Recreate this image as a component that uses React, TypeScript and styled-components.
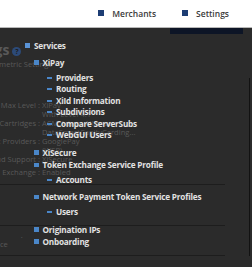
import React from "react";
import styled, { createGlobalStyle } from "styled-components";

const GlobalStyle = createGlobalStyle`
  html, body {
    margin: 0;
    padding: 0;
    width: 252px;
    height: 267px;
    overflow: hidden;
    background: #2b2b2b;
  }
  * { box-sizing: border-box; }
`;

type MenuNode = { title: string; children?: string[] };

const services: MenuNode[] = [
  {
    title: "XiPay",
    children: [
      "Providers",
      "Routing",
      "XiId Information",
      "Subdivisions",
      "Compare ServerSubs",
      "WebGUI Users",
    ],
  },
  { title: "XiSecure" },
  { title: "Token Exchange Service Profile", children: ["Accounts"] },
  { title: "Network Payment Token Service Profiles", children: ["Users"] },
  { title: "Origination IPs" },
  { title: "Onboarding" },
];

const details = [
  { label: "Max Level :", lines: ["XiPay", "With Level 4.1"] },
  { label: "Cartridges :", lines: ["ACM Adwm Alliance", "DataSmartCapityCarding..."] },
  { label: "Payment Providers :", lines: ["GooglePay", "(WSP)"] },
  { label: "Cloud Support :", lines: ["XiSecure"] },
  { label: "Exchange :", lines: ["Enabled"] },
];

export default function App() {
  return (
    <>
      <GlobalStyle />
      <Header>
        <NavItem>
          <NavSquare />
          Merchants
        </NavItem>
        <NavItem>
          <NavSquare />
          Settings
        </NavItem>
      </Header>
      <Body>
        <ActiveBarRow>
          <ActiveBar />
        </ActiveBarRow>
        <PageRow>
          <Page>
            <PageTitle>
              Settings <HelpIcon>?</HelpIcon>
            </PageTitle>
            <Subtitle>Parametric Settings</Subtitle>
            <DetailTable>
              {details.map((d) => (
                <DetailRow key={d.label}>
                  <DetailLabel>{d.label}</DetailLabel>
                  <DetailValue>
                    {d.lines.map((l) => (
                      <div key={l}>{l}</div>
                    ))}
                  </DetailValue>
                </DetailRow>
              ))}
            </DetailTable>
            <Rule />
            <EmptyRow />
            <Rule />
            <BalanceRow>
              <span>Balance</span>
              <Dot>.</Dot>
            </BalanceRow>
            <Rule />
          </Page>
          <EdgeLine />
        </PageRow>

        <Menu>
          <MenuHeading>
            <HeadSquare />
            Services
          </MenuHeading>
          <TopList>
            {services.map((s) => (
              <li key={s.title}>
                <TopItem>
                  <Square />
                  {s.title}
                </TopItem>
                {s.children && (
                  <SubList>
                    {s.children.map((c) => (
                      <SubItem key={c}>
                        <Dash />
                        {c}
                      </SubItem>
                    ))}
                  </SubList>
                )}
              </li>
            ))}
          </TopList>
        </Menu>
      </Body>
    </>
  );
}

const Header = styled.header`
  height: 28px;
  background: #ffffff;
  border-bottom: 1px solid #b8b8b8;
  display: flex;
  justify-content: flex-end;
  align-items: center;
  gap: 26px;
  padding: 0 23px 1px 0;
  font-family: "Open Sans", sans-serif;
  font-weight: 600;
  font-size: 8.5px;
  color: #3a3a3a;
`;

const NavItem = styled.div`
  display: flex;
  align-items: center;
  gap: 8px;
`;

const NavSquare = styled.span`
  width: 6px;
  height: 6px;
  background: #1d3d74;
`;

const Body = styled.main`
  position: relative;
  height: 239px;
  background: #2b2b2b;
  font-family: "Open Sans", sans-serif;
`;

const ActiveBarRow = styled.div`
  display: flex;
  justify-content: flex-end;
  padding-right: 9px;
`;

const ActiveBar = styled.div`
  width: 73px;
  height: 6px;
  background: #0d1526;
`;

const PageRow = styled.div`
  display: flex;
`;

const Page = styled.div`
  width: 225px;
  color: #595959;
  font-size: 7.6px;
  line-height: 9px;
`;

const PageTitle = styled.h1`
  margin: 7px 0 0 -47px;
  font-size: 14px;
  line-height: 18px;
  font-weight: 700;
  display: flex;
  align-items: center;
  gap: 3px;
`;

const HelpIcon = styled.span`
  width: 9px;
  height: 9px;
  margin-top: 2px;
  border-radius: 50%;
  background: #2c4a78;
  color: #1f1f1f;
  font-size: 7px;
  line-height: 9px;
  text-align: center;
`;

const Subtitle = styled.div`
  margin: 0.5px 0 0 -17px;
  white-space: nowrap;
`;

const DetailTable = styled.div`
  margin: 32px 0 7px;
  display: flex;
  flex-direction: column;
`;

const DetailRow = styled.div`
  display: grid;
  grid-template-columns: 40px 120px;
  column-gap: 2px;
  &:last-child {
    margin-top: 4px;
  }
`;

const DetailLabel = styled.div`
  white-space: nowrap;
  display: flex;
  justify-content: flex-end;
`;

const DetailValue = styled.div`
  white-space: nowrap;
`;

const Rule = styled.div`
  height: 1px;
  background: #1d1d1d;
`;

const EmptyRow = styled.div`
  height: 40px;
`;

const BalanceRow = styled.div`
  height: 29px;
  margin-left: -20px;
  padding-top: 14px;
  display: flex;
  gap: 13px;
`;

const Dot = styled.span`
  margin-top: -9px;
`;

const EdgeLine = styled.div`
  width: 1px;
  margin: 44px 2px 0 24px;
  background: #121212;
`;

const Menu = styled.nav`
  position: absolute;
  left: 25px;
  top: 12px;
  font-family: "Open Sans", sans-serif;
  font-weight: 700;
  font-size: 8.2px;
  letter-spacing: -0.2px;
  color: #e2e2e2;
`;

const MenuHeading = styled.div`
  display: flex;
  align-items: center;
  gap: 4px;
  line-height: 12.5px;
`;

const HeadSquare = styled.span`
  width: 5px;
  height: 5px;
  margin-bottom: 2px;
  background: #5a93d6;
`;

const TopList = styled.ul`
  list-style: none;
  margin: 4.6px 0 0 9px;
  padding: 0;
`;

const TopItem = styled.div`
  display: flex;
  align-items: center;
  gap: 4px;
  line-height: 12.3px;
  white-space: nowrap;
`;

const Square = styled.span`
  width: 4.5px;
  height: 4.5px;
  margin-bottom: 1px;
  background: #4a86c8;
`;

const SubList = styled.ul`
  list-style: none;
  margin: 2.5px 0 6px 13px;
  padding: 0;
`;

const SubItem = styled.li`
  display: flex;
  align-items: center;
  gap: 4px;
  line-height: 11.5px;
  white-space: nowrap;
`;

const Dash = styled.span`
  width: 5px;
  height: 2px;
  background: #4a86c8;
`;
